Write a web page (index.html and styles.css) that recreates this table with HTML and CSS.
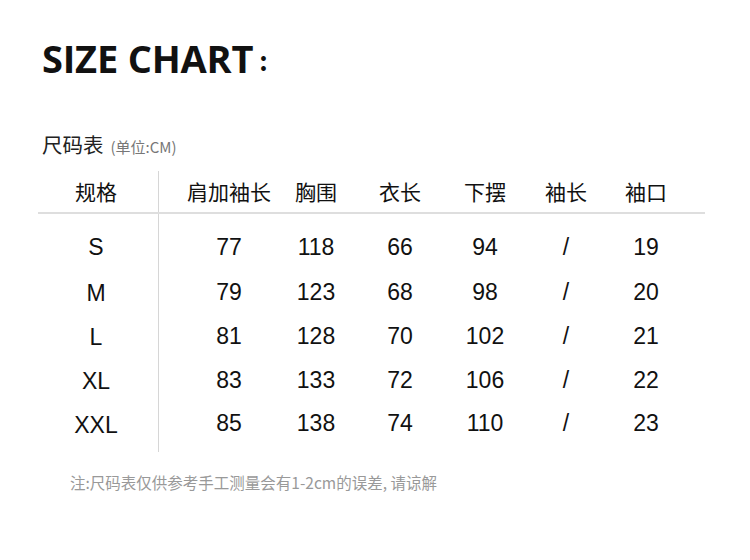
FILE: index.html
```html
<!DOCTYPE html>
<html lang="zh">
<head>
<meta charset="utf-8">
<title>Size Chart</title>
<link rel="stylesheet" href="styles.css">
</head>
<body>
<div class="page">
  <h1 class="title">SIZE CHART<span class="colon">:</span></h1>
  <div class="subtitle"><span class="sub-main">尺码表</span><span class="sub-unit">(单位:CM)</span></div>
  <div class="table">
    <div class="row head">
      <div class="cell label">规格</div>
      <div class="cell first">肩加袖长</div>
      <div class="cell">胸围</div>
      <div class="cell">衣长</div>
      <div class="cell">下摆</div>
      <div class="cell">袖长</div>
      <div class="cell">袖口</div>
    </div>
    <div class="body">
      <div class="row">
        <div class="cell label size">S</div>
        <div class="cell first">77</div><div class="cell">118</div><div class="cell">66</div><div class="cell">94</div><div class="cell">/</div><div class="cell">19</div>
      </div>
      <div class="row">
        <div class="cell label size">M</div>
        <div class="cell first">79</div><div class="cell">123</div><div class="cell">68</div><div class="cell">98</div><div class="cell">/</div><div class="cell">20</div>
      </div>
      <div class="row">
        <div class="cell label size">L</div>
        <div class="cell first">81</div><div class="cell">128</div><div class="cell">70</div><div class="cell">102</div><div class="cell">/</div><div class="cell">21</div>
      </div>
      <div class="row">
        <div class="cell label size">XL</div>
        <div class="cell first">83</div><div class="cell">133</div><div class="cell">72</div><div class="cell">106</div><div class="cell">/</div><div class="cell">22</div>
      </div>
      <div class="row">
        <div class="cell label size">XXL</div>
        <div class="cell first">85</div><div class="cell">138</div><div class="cell">74</div><div class="cell">110</div><div class="cell">/</div><div class="cell">23</div>
      </div>
    </div>
  </div>
  <p class="note">注:尺码表仅供参考手工测量会有1-2cm的误差, 请谅解</p>
</div>
</body>
</html>
```
FILE: styles.css
```css
* { box-sizing: border-box; }
html, body { margin: 0; padding: 0; background: #fff; }
body {
  width: 750px;
  height: 560px;
  overflow: hidden;
  font-family: "Liberation Sans", "Noto Sans CJK SC", sans-serif;
  color: #111;
}
.page {
  padding: 34px 45px 0 38px;
}
.title {
  margin: 0 0 0 4px;
  font-family: "Open Sans", "Noto Sans", sans-serif;
  font-weight: 700;
  font-size: 38px;
  line-height: 48px;
  letter-spacing: -0.2px;
  color: #111;
}
.colon {
  font-family: "Noto Sans CJK SC", sans-serif;
  font-weight: 700;
  font-size: 26px;
  margin-left: 6px;
  vertical-align: 2px;
}
.subtitle {
  margin: 47px 0 0 4px;
  display: flex;
  align-items: baseline;
  gap: 7px;
  height: 26px;
}
.sub-main {
  font-family: "Noto Sans CJK SC", sans-serif;
  font-size: 20.5px;
  line-height: 26px;
  color: #222;
}
.sub-unit {
  font-family: "Noto Sans CJK SC", sans-serif;
  font-size: 15px;
  color: #777;
}
.table {
  margin-top: 14px;
}
.row {
  display: grid;
  grid-template-columns: 121px 113px 88px 80px 90px 72px 88px;
  align-items: center;
}
.row.head {
  height: 43px;
  border-bottom: 2px solid #dedede;
}
.head .cell {
  font-family: "Noto Sans CJK SC", sans-serif;
  font-size: 21px;
  line-height: 41px;
  color: #111;
}
.cell {
  text-align: center;
  font-size: 23px;
  line-height: 44px;
  color: #111;
}
.cell.label {
  border-right: 1.5px solid #d6d6d6;
  align-self: stretch;
  padding-right: 4px;
}
.cell.first {
  padding-left: 27px;
}
.body .row {
  height: 44px;
}
.body .row:first-child {
  height: 55px;
  align-items: end;
}
.body .row:first-child .cell.label {
  padding-top: 11px;
}
.body .row:last-child {
  height: 51px;
  align-items: start;
}
.size {
  padding-top: 2px;
}
.note {
  margin: 19px 0 0 32px;
  font-family: "Noto Sans CJK SC", sans-serif;
  font-size: 15.5px;
  color: #999;
}
```
